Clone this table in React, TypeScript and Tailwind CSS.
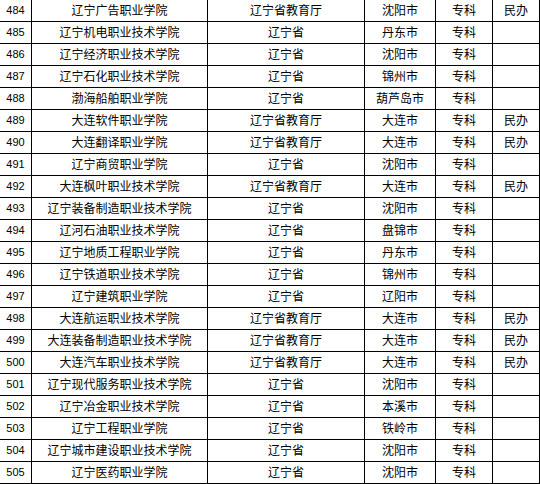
const rows: [number, string, string, string, string, string][] = [
  [484, "辽宁广告职业学院", "辽宁省教育厅", "沈阳市", "专科", "民办"],
  [485, "辽宁机电职业技术学院", "辽宁省", "丹东市", "专科", ""],
  [486, "辽宁经济职业技术学院", "辽宁省", "沈阳市", "专科", ""],
  [487, "辽宁石化职业技术学院", "辽宁省", "锦州市", "专科", ""],
  [488, "渤海船舶职业学院", "辽宁省", "葫芦岛市", "专科", ""],
  [489, "大连软件职业学院", "辽宁省教育厅", "大连市", "专科", "民办"],
  [490, "大连翻译职业学院", "辽宁省教育厅", "大连市", "专科", "民办"],
  [491, "辽宁商贸职业学院", "辽宁省", "沈阳市", "专科", ""],
  [492, "大连枫叶职业技术学院", "辽宁省教育厅", "大连市", "专科", "民办"],
  [493, "辽宁装备制造职业技术学院", "辽宁省", "沈阳市", "专科", ""],
  [494, "辽河石油职业技术学院", "辽宁省", "盘锦市", "专科", ""],
  [495, "辽宁地质工程职业学院", "辽宁省", "丹东市", "专科", ""],
  [496, "辽宁铁道职业技术学院", "辽宁省", "锦州市", "专科", ""],
  [497, "辽宁建筑职业学院", "辽宁省", "辽阳市", "专科", ""],
  [498, "大连航运职业技术学院", "辽宁省教育厅", "大连市", "专科", "民办"],
  [499, "大连装备制造职业技术学院", "辽宁省教育厅", "大连市", "专科", "民办"],
  [500, "大连汽车职业技术学院", "辽宁省教育厅", "大连市", "专科", "民办"],
  [501, "辽宁现代服务职业技术学院", "辽宁省", "沈阳市", "专科", ""],
  [502, "辽宁冶金职业技术学院", "辽宁省", "本溪市", "专科", ""],
  [503, "辽宁工程职业学院", "辽宁省", "铁岭市", "专科", ""],
  [504, "辽宁城市建设职业技术学院", "辽宁省", "沈阳市", "专科", ""],
  [505, "辽宁医药职业学院", "辽宁省", "沈阳市", "专科", ""],
];

const cell = "flex h-full items-center justify-center border-r border-black";

export default function App() {
  return (
    <div className="h-[484px] w-[540px] overflow-hidden bg-white text-[12px] text-black font-['Liberation_Sans','Noto_Sans_CJK_SC',sans-serif]">
      {rows.map(([no, name, dept, city, level, note]) => (
        <div key={no} className="flex h-[22px] border-b border-black leading-none">
          <div className={`${cell} w-[32px] text-[11px]`}>{no}</div>
          <div className={`${cell} w-[176px]`}>{name}</div>
          <div className={`${cell} w-[157px]`}>{dept}</div>
          <div className={`${cell} w-[71px]`}>{city}</div>
          <div className={`${cell} w-[57px]`}>{level}</div>
          <div className={`${cell} w-[47px]`}>{note}</div>
        </div>
      ))}
    </div>
  );
}
